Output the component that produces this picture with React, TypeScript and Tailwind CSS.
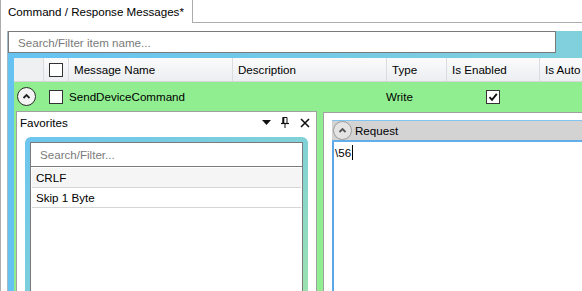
import React from 'react';

const columns = [
  { key: 'exp', label: '', w: 'w-[29px]' },
  { key: 'chk', label: '', w: 'w-[25px]' },
  { key: 'name', label: 'Message Name', w: 'w-[164px]' },
  { key: 'desc', label: 'Description', w: 'w-[154px]' },
  { key: 'type', label: 'Type', w: 'w-[60px]' },
  { key: 'enabled', label: 'Is Enabled', w: 'w-[93px]' },
  { key: 'auto', label: 'Is Auto', w: 'w-[80px]' },
];

function CheckBox({ checked = false }: { checked?: boolean }) {
  return (
    <div className="w-[14px] h-[14px] border border-[#333] bg-white flex items-center justify-center shrink-0">
      {checked && (
        <svg width="10" height="10" viewBox="0 0 10 10">
          <path d="M1.5 5.2 L4 7.8 L8.8 1.8" fill="none" stroke="#111" strokeWidth="1.9" />
        </svg>
      )}
    </div>
  );
}

function ExpandButton({ light = false }: { light?: boolean }) {
  return (
    <div
      className={`w-[19px] h-[19px] rounded-full flex items-center justify-center shrink-0 ${
        light ? 'border border-[#9c9c9c] bg-[#e4e4e4]' : 'border-[1.5px] border-[#2b2b2b] bg-[#f4f4f4]'
      }`}
    >
      <svg width="11" height="11" viewBox="0 0 11 11">
        <path d="M2.5 7 L5.5 4 L8.5 7" fill="none" stroke={light ? '#555' : '#222'} strokeWidth="1.8" />
      </svg>
    </div>
  );
}

export default function App() {
  return (
    <div className="w-[582px] h-[291px] overflow-hidden bg-white border-l border-[#acacac] text-[11.6px] leading-[15px] text-black font-['Liberation_Sans',Arial,sans-serif] flex flex-col">
      {/* tab strip */}
      <div className="flex h-[23px] shrink-0">
        <div className="w-[192px] h-[23px] border-r border-[#acacac] pl-[7px] flex items-center">
          Command / Response Messages*
        </div>
        <div className="flex-1 border-b border-[#acacac]" />
      </div>

      {/* tab content */}
      <div className="flex-1 pl-[6px] pt-[8px] min-h-0 flex overflow-hidden">
        <div className="flex-1 flex flex-col border-l border-[#a4bcc8] bg-linear-to-r from-[#66c3f1] to-[#80d0dc] min-w-0">
          <div className="w-[548px] h-[22px] border border-[#7a7a7a] bg-white pl-[9px] flex items-center text-[#7a7a7a] shrink-0">
            Search/Filter item name...
          </div>

          <div className="ml-[6px] mt-[5px] flex flex-col shrink-0 overflow-hidden">
            {/* header */}
            <div className="flex h-[24px] shrink-0 bg-linear-to-b from-[#fbfbfc] to-[#eceef1] border-b border-[#d5d5d5] whitespace-nowrap">
              {columns.map((c, i) => (
                <div
                  key={c.key}
                  className={`${c.w} shrink-0 h-full flex items-center pl-[5px] ${i > 0 ? 'border-l border-[#dadcdf]' : ''} ${i === 0 ? 'bg-[#eef0f2]' : ''}`}
                >
                  {c.key === 'chk' ? <CheckBox /> : c.label}
                </div>
              ))}
            </div>

            {/* message row */}
            <div className="flex h-[29px] shrink-0 bg-[#90ee90] items-center">
              <div className="w-[29px] shrink-0 pl-[3px]">
                <ExpandButton />
              </div>
              <div className="w-[25px] shrink-0 pl-[6px]">
                <CheckBox />
              </div>
              <div className="w-[164px] shrink-0 pl-[1px]">SendDeviceCommand</div>
              <div className="w-[154px] shrink-0" />
              <div className="w-[60px] shrink-0">Write</div>
              <div className="w-[93px] shrink-0 flex justify-center">
                <CheckBox checked />
              </div>
            </div>

            {/* row details */}
            <div className="h-[220px] shrink-0 flex bg-[#90ee90] pl-[2px]">
              {/* favorites */}
              <div className="w-[301px] shrink-0 border-l border-t border-r border-[#a0a0a0] bg-white flex flex-col">
                <div className="h-[21px] flex items-center pl-[3px] pr-[6px] shrink-0">
                  <span className="flex-1">Favorites</span>
                  <svg width="9" height="5" viewBox="0 0 9 5" className="mr-[10px]">
                    <path d="M0 0 H9 L4.5 5 Z" fill="#111" />
                  </svg>
                  <svg width="8" height="11" viewBox="0 0 8 11" className="mr-[11px]">
                    <path d="M2 0.5 H6 V6.5 M2 0.5 V6.5" fill="none" stroke="#111" strokeWidth="1" />
                    <rect x="1.5" y="0" width="1.8" height="6.5" fill="#111" />
                    <path d="M0 6.5 H8" stroke="#111" strokeWidth="1.2" />
                    <path d="M4 7 V11" stroke="#111" strokeWidth="1" />
                  </svg>
                  <svg width="10" height="10" viewBox="0 0 10 10">
                    <path d="M1 1 L9 9 M9 1 L1 9" stroke="#111" strokeWidth="1.6" />
                  </svg>
                </div>
                <div className="flex-1 px-[8px] pt-[4px] flex flex-col min-h-0">
                  <div className="flex-1 rounded-[6px] p-[5px] bg-linear-to-br from-[#6cc5ee] via-[#80d1d8] to-[#a2e6a4] flex">
                    <div className="flex-1 bg-white flex flex-col">
                      <div className="h-[25px] border border-[#7a7a7a] pl-[9px] flex items-center text-[#7a7a7a] shrink-0">
                        Search/Filter...
                      </div>
                      <div className="flex-1 border-l border-r border-[#7a7a7a] px-[1px] pt-[1px]">
                        <div className="h-[20px] bg-[#f5f5f5] border-b border-[#d6d6d6] pl-[4px] flex items-center">CRLF</div>
                        <div className="h-[20px] border-b border-[#d6d6d6] pl-[4px] flex items-center">Skip 1 Byte</div>
                      </div>
                    </div>
                  </div>
                </div>
              </div>

              {/* request */}
              <div className="flex-1 ml-[6px] mt-[1px] border-l border-t border-[#a0a0a0] bg-white pl-[8px] pt-[7px] flex flex-col min-w-0">
                <div className="h-[22px] shrink-0 border-t border-[#80c4ef] border-b-2 border-b-[#62aeea] bg-[#d3d3d3] flex items-center pl-[1px]">
                  <ExpandButton light />
                  <span className="ml-[3px]">Request</span>
                </div>
                <div className="flex-1 border-l-2 border-[#5ca7e7] pl-[1px] pt-[3px]">
                  <span>\56</span>
                  <span className="inline-block w-[1px] h-[15px] bg-black align-top ml-[1px]" />
                </div>
              </div>
            </div>
          </div>
        </div>
      </div>
    </div>
  );
}
